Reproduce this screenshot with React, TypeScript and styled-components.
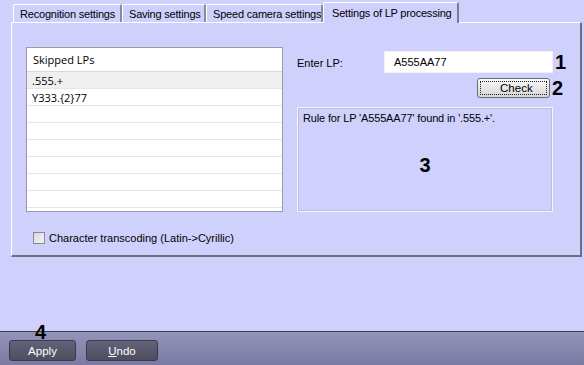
import React from "react";
import styled, { createGlobalStyle } from "styled-components";

const LAVENDER = "#d0d0fc";
const UI_FONT = `"Liberation Sans", "DejaVu Sans", Arial, sans-serif`;

const GlobalStyle = createGlobalStyle`
  html, body {
    margin: 0;
    padding: 0;
    background: ${LAVENDER};
  }
  body {
    font-family: ${UI_FONT};
    font-size: 11px;
    color: #000;
  }
`;

const Window = styled.div`
  width: 584px;
  height: 365px;
  display: flex;
  flex-direction: column;
  background: ${LAVENDER};
  overflow: hidden;
`;

const TabStrip = styled.div`
  display: flex;
  align-items: flex-end;
  height: 20px;
  margin-top: 2px;
  padding-left: 13px;
  position: relative;
  z-index: 1;
`;

const Tab = styled.div<{ $w: number; $active?: boolean }>`
  box-sizing: border-box;
  width: ${(p) => p.$w}px;
  height: ${(p) => (p.$active ? 21 : 18)}px;
  margin-bottom: ${(p) => (p.$active ? -1 : 0)}px;
  padding-left: ${(p) => (p.$active ? 8 : 6)}px;
  display: flex;
  align-items: center;
  background: ${LAVENDER};
  border-top: 1px solid #fff;
  border-left: 1px solid #fff;
  border-right: 2px solid ${(p) => (p.$active ? "#7c7c90" : "#8a8a9c")};
  border-top-left-radius: 2px;
  border-top-right-radius: 2px;
  white-space: nowrap;
  overflow: hidden;
  font-size: 11px;
  letter-spacing: -0.2px;
`;

const Panel = styled.div`
  box-sizing: border-box;
  margin: 0 2px 0 11px;
  height: 235px;
  border-top: 1px solid #fff;
  border-left: 1px solid #fff;
  border-right: 2px solid #6e6e80;
  border-bottom: 2px solid #6e6e80;
  padding: 24px 0 0 14px;
  display: flex;
  flex-direction: column;
`;

const PanelBody = styled.div`
  display: flex;
  gap: 14px;
  height: 165px;
`;

const ListBox = styled.div`
  box-sizing: border-box;
  width: 257px;
  height: 165px;
  background: #fff;
  border: 1px solid #9a9aa6;
  overflow: hidden;
`;

const ListHeader = styled.div`
  height: 23px;
  padding-left: 6px;
  display: flex;
  align-items: center;
  border-bottom: 1px solid #d8d8d8;
  font-family: "Open Sans", "DejaVu Sans", sans-serif;
  font-size: 11px;
`;

const ListRow = styled.div<{ $selected?: boolean }>`
  box-sizing: border-box;
  height: 17px;
  padding-left: 5px;
  display: flex;
  align-items: center;
  border-bottom: 1px solid #e6e6e6;
  background: ${(p) => (p.$selected ? "#efefef" : "#fff")};
  font-family: "Open Sans", "DejaVu Sans", sans-serif;
  font-size: 11px;
`;

const RightColumn = styled.div`
  display: flex;
  flex-direction: column;
  width: 270px;
`;

const FieldRow = styled.div`
  display: flex;
  align-items: center;
  height: 22px;
  margin-top: 4px;
`;

const FieldLabel = styled.span`
  width: 87px;
  font-size: 11px;
  padding-top: 2px;
`;

const TextInput = styled.div`
  box-sizing: border-box;
  width: 169px;
  height: 22px;
  background: #fff;
  border: 1px solid #f0f0f6;
  padding-left: 9px;
  display: flex;
  align-items: center;
  font-size: 11px;
`;

const Marker = styled.span`
  font-family: "Liberation Sans", Arial, sans-serif;
  font-weight: bold;
  font-size: 20px;
  line-height: 1;
  margin-left: 2px;
`;

const ButtonRow = styled.div`
  display: flex;
  align-items: center;
  justify-content: flex-end;
  margin-top: 5px;
  height: 20px;
  padding-right: 4px;
`;

const CheckButton = styled.div`
  box-sizing: border-box;
  position: relative;
  width: 73px;
  height: 20px;
  border: 1px solid #6c6c74;
  border-radius: 3px;
  background: linear-gradient(#fbfbfb, #e4e4e4 60%, #d6d6d6);
  display: flex;
  align-items: center;
  justify-content: center;
  font-size: 11.5px;
  padding-left: 6px;

  &::after {
    content: "";
    position: absolute;
    inset: 2px;
    border: 1px dotted #222;
  }
`;

const ResultBox = styled.div`
  box-sizing: border-box;
  margin-top: 9px;
  width: 256px;
  height: 105px;
  border: 1px solid #f4f4fa;
  box-shadow: inset 0 0 0 1px #bebed6;
  padding: 4px 5px;
  display: flex;
  flex-direction: column;
  font-size: 11px;
  letter-spacing: -0.15px;
`;

const BigMarker = styled.div`
  font-family: "Liberation Sans", Arial, sans-serif;
  font-weight: bold;
  font-size: 20px;
  align-self: center;
  margin-top: 30px;
`;

const CheckRow = styled.label`
  display: flex;
  align-items: center;
  gap: 4px;
  margin: 20px 0 0 7px;
  font-size: 11px;
`;

const CheckBox = styled.span`
  box-sizing: border-box;
  width: 12px;
  height: 12px;
  border: 1px solid #8a8a96;
  background: linear-gradient(135deg, #d8d8dc, #f6f6f6);
`;

const Spacer = styled.div`
  flex: 1;
`;

const BottomBar = styled.div`
  height: 34px;
  border-top: 1px solid #3c3c50;
  background: linear-gradient(#9494ba, #7a7aa2);
  display: flex;
  align-items: flex-start;
  gap: 10px;
  padding: 8px 0 0 9px;
  box-sizing: border-box;
  position: relative;
`;

const BarButton = styled.div<{ $w: number }>`
  box-sizing: border-box;
  position: relative;
  width: ${(p) => p.$w}px;
  height: 21px;
  border: 1px solid #3a3a48;
  border-radius: 3px;
  background: linear-gradient(#62627a, #4e4e60);
  color: #fff;
  display: flex;
  align-items: center;
  justify-content: center;
  font-size: 11.5px;

  u {
    text-decoration: underline;
  }
`;

const FloatingMarker = styled.span`
  position: absolute;
  left: 25px;
  top: -19px;
  font-family: "Liberation Sans", Arial, sans-serif;
  font-weight: bold;
  font-size: 20px;
  line-height: 1;
  color: #000;
`;

const tabs = [
  { label: "Recognition settings", w: 109 },
  { label: "Saving settings", w: 84 },
  { label: "Speed camera settings", w: 117 },
  { label: "Settings of LP processing", w: 136, active: true },
];

const skipped = [".555.+", "Y333.{2}77", "", "", "", "", "", ""];

export default function App() {
  return (
    <>
      <GlobalStyle />
      <Window>
        <TabStrip>
          {tabs.map((t) => (
            <Tab key={t.label} $w={t.w} $active={t.active}>
              {t.label}
            </Tab>
          ))}
        </TabStrip>

        <Panel>
          <PanelBody>
            <ListBox>
              <ListHeader>Skipped LPs</ListHeader>
              {skipped.map((s, i) => (
                <ListRow key={i} $selected={i === 0}>
                  {s}
                </ListRow>
              ))}
            </ListBox>

            <RightColumn>
              <FieldRow>
                <FieldLabel>Enter LP:</FieldLabel>
                <TextInput>A555AA77</TextInput>
                <Marker>1</Marker>
              </FieldRow>
              <ButtonRow>
                <CheckButton>Check</CheckButton>
                <Marker>2</Marker>
              </ButtonRow>
              <ResultBox>
                <span>Rule for LP 'A555AA77' found in '.555.+'.</span>
                <BigMarker>3</BigMarker>
              </ResultBox>
            </RightColumn>
          </PanelBody>

          <CheckRow>
            <CheckBox />
            Character transcoding (Latin-&gt;Cyrillic)
          </CheckRow>
        </Panel>

        <Spacer />

        <BottomBar>
          <BarButton $w={67}>
            <FloatingMarker>4</FloatingMarker>
            Apply
          </BarButton>
          <BarButton $w={72}>
            <u>U</u>ndo
          </BarButton>
        </BottomBar>
      </Window>
    </>
  );
}
